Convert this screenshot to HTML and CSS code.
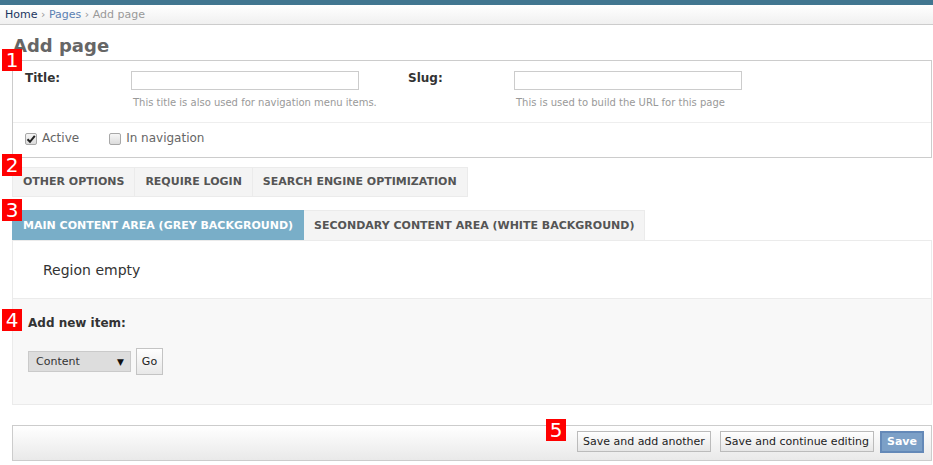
FILE: index.html
```html
<!DOCTYPE html>
<html>
<head>
<meta charset="utf-8">
<title>Add page</title>
<link rel="stylesheet" href="styles.css">
</head>
<body>
<div class="topbar"></div>
<div class="breadcrumbs"><a class="bc-home">Home</a> <span class="sep">›</span> <a class="bc-link">Pages</a> <span class="sep">›</span> Add page</div>
<div class="content">
  <h1 class="title">Add page</h1>
  <div class="module">
    <div class="fields">
      <div class="field">
        <label class="flabel">Title:</label>
        <div class="fcol">
          <input class="text" type="text">
          <p class="help">This title is also used for navigation menu items.</p>
        </div>
      </div>
      <div class="field">
        <label class="flabel">Slug:</label>
        <div class="fcol">
          <input class="text" type="text">
          <p class="help">This is used to build the URL for this page</p>
        </div>
      </div>
    </div>
    <div class="checks">
      <label class="check"><span class="cb"><svg width="10" height="10" viewBox="0 0 10 10"><path d="M1.5 5.2 L4 7.8 L8.8 1.8" fill="none" stroke="#222" stroke-width="2"/></svg></span>Active</label>
      <label class="check check-nav"><span class="cb"></span>In navigation</label>
    </div>
  </div>

  <div class="tabs tabs-options">
    <div class="tab">Other options</div>
    <div class="tab">Require login</div>
    <div class="tab">Search engine optimization</div>
  </div>

  <div class="tabs tabs-regions">
    <div class="tab tab-active">Main content area (grey background)</div>
    <div class="tab">Secondary content area (white background)</div>
  </div>

  <div class="panel">
    <div class="region">Region empty</div>
    <div class="additem">
      <div class="additem-title">Add new item:</div>
      <div class="additem-row">
        <div class="select"><span>Content</span><span class="arrow">▼</span></div>
        <button class="btn btn-go">Go</button>
      </div>
    </div>
  </div>

  <div class="submit-row">
    <button class="btn btn-footer">Save and add another</button>
    <button class="btn btn-footer btn-continue">Save and continue editing</button>
    <button class="btn btn-save">Save</button>
  </div>
</div>

<span class="marker m1">1</span>
<span class="marker m2">2</span>
<span class="marker m3">3</span>
<span class="marker m4">4</span>
<span class="marker m5">5</span>
</body>
</html>
```
FILE: styles.css
```css
html, body {
  margin: 0;
  padding: 0;
  background: #fff;
}
body {
  font-family: "DejaVu Sans", Verdana, sans-serif;
  color: #333;
  font-size: 12px;
  position: relative;
  width: 933px;
  height: 465px;
  overflow: hidden;
}
.topbar {
  height: 5px;
  background: #417690;
}
.breadcrumbs {
  height: 19px;
  line-height: 19px;
  padding: 0 5px;
  font-size: 11px;
  color: #999;
  background: linear-gradient(#ffffff, #f0f0f0);
  border-bottom: 1px solid #ccc;
}
.bc-home { color: #1b3560; }
.bc-link { color: #5b80b2; }
.sep { color: #999; }

.content {
  margin: 0 1px 0 12px;
}
.title {
  margin: 0;
  padding: 10px 0 4px 1px;
  font-size: 18px;
  line-height: 21px;
  font-weight: bold;
  color: #666;
}
.module {
  border: 1px solid #ccc;
}
.fields {
  display: flex;
  padding: 10px 12px 12px;
  border-bottom: 1px solid #eee;
}
.field {
  display: flex;
  width: 383px;
}
.flabel {
  width: 106px;
  font-weight: bold;
  font-size: 12px;
  line-height: 15px;
  color: #333;
}
.fcol {
  display: flex;
  flex-direction: column;
}
.text {
  box-sizing: border-box;
  width: 228px;
  height: 19px;
  margin: 0;
  border: 1px solid #ccc;
  padding: 0 3px;
  background: #fff;
}
.help {
  margin: 6px 0 0 2px;
  font-size: 10px;
  line-height: 14px;
  color: #999;
}
.checks {
  display: flex;
  align-items: flex-start;
  box-sizing: border-box;
  height: 34px;
  padding: 8px 12px 0;
}
.check {
  display: flex;
  align-items: flex-start;
  font-size: 12px;
  line-height: 14px;
  color: #666;
}
.check-nav {
  margin-left: 30px;
}
.cb {
  box-sizing: border-box;
  width: 12px;
  height: 12px;
  margin: 2px 5px 0 0;
  border: 1px solid #a8a8a8;
  border-radius: 2px;
  background: linear-gradient(#f6f6f6, #dcdcdc);
  display: flex;
  align-items: center;
  justify-content: center;
}
.cb svg { display: block; }

.tabs {
  display: flex;
}
.tabs-options {
  margin-top: 9px;
}
.tabs-regions {
  margin-top: 13px;
}
.tab {
  padding: 0 10px;
  font-size: 11px;
  font-weight: bold;
  text-transform: uppercase;
  color: #555;
  background: #f4f4f4;
  border: 1px solid #ebebeb;
  border-left: none;
}
.tab:first-child {
  border-left: 1px solid #ebebeb;
}
.tabs-options .tab {
  line-height: 28px;
}
.tabs-regions .tab {
  line-height: 29px;
  border-bottom: none;
}
.tab-active {
  background: #79aec8;
  color: #fff;
  border-color: #79aec8;
}
.tabs-regions .tab-active:first-child {
  border-left-color: #79aec8;
}

.panel {
  border: 1px solid #ebebeb;
}
.region {
  padding: 21px 30px 20px;
  font-size: 14px;
  line-height: 16px;
  color: #333;
  border-bottom: 1px solid #ebebeb;
}
.additem {
  background: #f8f8f8;
  padding: 17px 15px 29px;
}
.additem-title {
  font-weight: bold;
  font-size: 12px;
  line-height: 15px;
  color: #333;
}
.additem-row {
  display: flex;
  align-items: center;
  margin-top: 17px;
}
.select {
  box-sizing: border-box;
  width: 103px;
  height: 21px;
  display: flex;
  align-items: center;
  justify-content: space-between;
  padding: 0 6px 0 7px;
  background: #dddddd;
  border: 1px solid #cacaca;
  font-size: 11px;
  color: #333;
}
.arrow {
  font-size: 9px;
  color: #111;
}
.btn {
  font-family: "DejaVu Sans", Verdana, sans-serif;
  font-size: 11px;
  margin: 0;
  cursor: pointer;
}
.btn-go {
  box-sizing: border-box;
  margin-left: 5px;
  width: 27px;
  height: 27px;
  padding: 0;
  color: #222;
  background: linear-gradient(#ffffff, #e8e8e8);
  border: 1px solid #c4c4c4;
}
.submit-row {
  margin-top: 20px;
  display: flex;
  justify-content: flex-end;
  align-items: flex-start;
  height: 29px;
  padding: 5px 7px 0 0;
  border: 1px solid #cccccc;
  background: linear-gradient(#ffffff, #e9e9e9);
}
.btn-footer {
  height: 21px;
  line-height: 19px;
  padding: 0 5px;
  color: #222;
  background: linear-gradient(#ffffff, #e6e6e6);
  border: 1px solid #bbbbbb;
}
.btn-continue {
  margin-left: 9px;
  padding: 0 4px;
}
.btn-save {
  margin-left: 6px;
  height: 22px;
  line-height: 18px;
  padding: 0 5px;
  font-weight: bold;
  color: #fff;
  background: #7ca0c7;
  border: 2px solid #6489b8;
}

.marker {
  position: absolute;
  width: 20px;
  height: 22px;
  line-height: 22px;
  text-align: center;
  background: #ff0000;
  color: #fff;
  font-size: 20px;
  font-family: "DejaVu Sans", Verdana, sans-serif;
}
.m1 { left: 2px; top: 49px; }
.m2 { left: 2px; top: 154px; }
.m3 { left: 2px; top: 199px; }
.m4 { left: 2px; top: 309px; }
.m5 { left: 546px; top: 419px; }
```
